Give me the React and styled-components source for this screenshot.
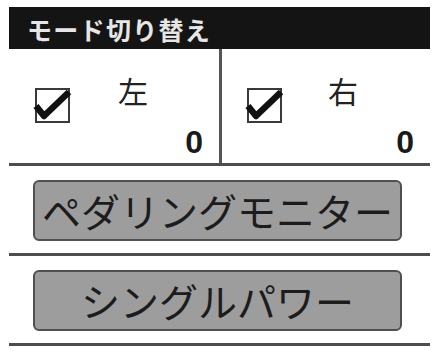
import React from 'react'
import styled, { createGlobalStyle } from 'styled-components'

const GlobalStyle = createGlobalStyle`
    html, body {
        margin: 0;
        padding: 0;
        background: #fff;
    }
    body {
        font-family: "Noto Sans CJK JP", "Noto Sans", sans-serif;
    }
`
const Panel = styled.div`
    width: 421px;
    padding: 7px 0 0 9px;
`
const Header = styled.div`
    height: 42px;
    box-sizing: border-box;
    background: #141414;
    color: #e6e6e6;
    font-size: 25px;
    font-weight: 700;
    letter-spacing: 1.3px;
    line-height: 40px;
    padding: 2px 0 0 18px;
`
const SideRow = styled.div`
    display: grid;
    grid-template-columns: 210px 3px 1fr;
    border-bottom: 3px solid #4d4d4d;
`
const Divider = styled.div`
    background: #555;
`
const Cell = styled.div`
    display: flex;
    flex-direction: column;
    height: 114px;
    box-sizing: border-box;
    padding: 26px 16px 5px ${p => p.$left}px;
`
const TopLine = styled.div`
    display: flex;
    align-items: flex-start;
    height: 48px;
`
const CheckIcon = styled.svg`
    margin-top: 13px;
    flex: none;
    overflow: visible;
`
const SideLabel = styled.span`
    margin-left: ${p => p.$gap}px;
    font-size: 30px;
    line-height: 1;
    color: #222;
`
const Count = styled.span`
    margin-top: 3px;
    align-self: flex-end;
    font-family: "Liberation Sans", Arial, sans-serif;
    font-weight: 700;
    font-size: 32px;
    line-height: 1;
    color: #1a1a1a;
`
const ButtonRow = styled.div`
    padding: 14px 0 12px 24px;
    border-bottom: 3px solid #4d4d4d;
`
const ModeButton = styled.button`
    display: flex;
    align-items: center;
    justify-content: center;
    width: 369px;
    height: 61px;
    padding: 0;
    box-sizing: border-box;
    background: #9d9d9d;
    border: 2px solid #505050;
    border-radius: 6px;
    font-family: "Noto Sans CJK JP", sans-serif;
    font-size: 39px;
    line-height: 1;
    color: #1c1c1c;
`

const Check = () => (
    <CheckIcon width="35" height="35" viewBox="0 0 35 35">
        <rect x="1" y="1" width="33" height="33" fill="none" stroke="#3a3a3a" strokeWidth="2" />
        <polyline points="1,18 9,28 34,4" fill="none" stroke="#111" strokeWidth="6.5" strokeLinejoin="round" />
    </CheckIcon>
)

const sides = [
    { label: '左', left: 26, gap: 48 },
    { label: '右', left: 25, gap: 46 },
]

const App = () => {
    return (
        <>
            <GlobalStyle />
            <Panel>
                <Header>モード切り替え</Header>
                <SideRow>
                    {sides.map((side, index) => (
                        <React.Fragment key={side.label}>
                            {index > 0 && <Divider />}
                            <Cell $left={side.left}>
                                <TopLine>
                                    <Check />
                                    <SideLabel $gap={side.gap}>{side.label}</SideLabel>
                                </TopLine>
                                <Count>0</Count>
                            </Cell>
                        </React.Fragment>
                    ))}
                </SideRow>
                <ButtonRow>
                    <ModeButton>ペダリングモニター</ModeButton>
                </ButtonRow>
                <ButtonRow>
                    <ModeButton>シングルパワー</ModeButton>
                </ButtonRow>
            </Panel>
        </>
    )
}

export default App
